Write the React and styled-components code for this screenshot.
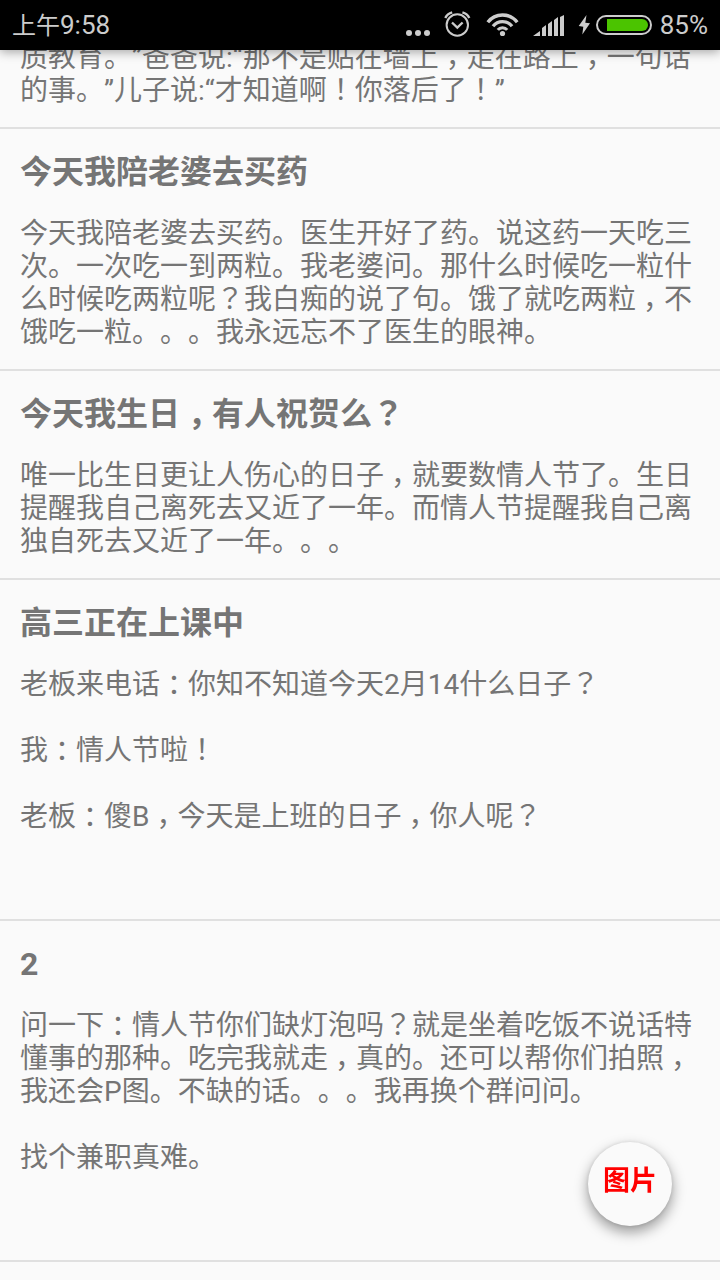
import React from "react";
import styled, { createGlobalStyle } from "styled-components";

const GlobalStyle = createGlobalStyle`
  body {
    margin: 0;
    background: #fafafa;
    color: #757575;
    font-family: Roboto, "Noto Sans CJK SC", sans-serif;
    text-spacing-trim: space-all;
  }
`;

const Screen = styled.div`
  height: 100vh;
  display: flex;
  flex-direction: column;
  overflow: hidden;
`;

const StatusBar = styled.header`
  position: relative;
  z-index: 1;
  flex: none;
  display: flex;
  align-items: center;
  justify-content: space-between;
  box-sizing: border-box;
  height: 50px;
  padding: 0 12px;
  background: #000;
  color: #ccc;
  font-size: 26px;
  line-height: 26px;
  box-shadow: 0 2px 10px rgba(0, 0, 0, 0.35);
`;

const Meridiem = styled.span`
  font-size: 24px;
  line-height: 1;
`;

const StatusIcons = styled.div`
  display: flex;
  align-items: center;
  gap: 7px;
  svg {
    display: block;
  }
`;

const Feed = styled.main`
  flex: 1;
  min-height: 0;
  overflow: hidden;
  display: flex;
  flex-direction: column;
`;

// list is scrolled so the first joke is partly under the status bar
const List = styled.div`
  margin-top: -30px;
`;

const Joke = styled.article`
  padding: 21px 20px 20px;
  border-bottom: 2px solid #e0e0e0;
`;

const Title = styled.h2`
  margin: 0 0 23px;
  font-size: 32px;
  line-height: 44px;
  font-weight: 700;
`;

const Text = styled.p`
  margin: 0;
  font-size: 28px;
  line-height: 33px;
  white-space: pre-line;
`;

// full-width punctuation sits in the middle of its cell
const Mark = styled.span`
  font-family: "Noto Sans CJK JP", sans-serif;
  line-height: 1;
`;

const HalfMark = styled.span`
  padding: 0 0.25em;
  font-feature-settings: "halt";
  line-height: 1;
`;

const Fab = styled.button`
  position: fixed;
  right: 48px;
  bottom: 54px;
  width: 84px;
  height: 84px;
  padding: 0 0 12px;
  border: 0;
  border-radius: 50%;
  background: #fafafa;
  color: #f00;
  font: 700 27px Roboto, "Noto Sans CJK SC", sans-serif;
  box-shadow: 0 6px 14px rgba(0, 0, 0, 0.4), 0 0 4px rgba(0, 0, 0, 0.1);
`;

const withMarks = (text) =>
  text.split(/([，：？！])/).map((part, i) => {
    if (/^[，：]$/.test(part)) return <HalfMark key={i}>{part}</HalfMark>;
    if (/^[？！]$/.test(part)) return <Mark key={i}>{part}</Mark>;
    return part;
  });

const jokes = [
  {
    text: "质教育。”爸爸说:“那不是贴在墙上，走在路上，一句话的事。”儿子说:“才知道啊！你落后了！”",
  },
  {
    title: "今天我陪老婆去买药",
    text: "今天我陪老婆去买药。医生开好了药。说这药一天吃三次。一次吃一到两粒。我老婆问。那什么时候吃一粒什么时候吃两粒呢？我白痴的说了句。饿了就吃两粒，不饿吃一粒。。。我永远忘不了医生的眼神。",
  },
  {
    title: "今天我生日，有人祝贺么？",
    text: "唯一比生日更让人伤心的日子，就要数情人节了。生日提醒我自己离死去又近了一年。而情人节提醒我自己离独自死去又近了一年。。。",
  },
  {
    title: "高三正在上课中",
    text: "老板来电话：你知不知道今天2月14什么日子？\n\n我：情人节啦！\n\n老板：傻B，今天是上班的日子，你人呢？\n\n\n",
  },
  {
    title: "2",
    text: "问一下：情人节你们缺灯泡吗？就是坐着吃饭不说话特懂事的那种。吃完我就走，真的。还可以帮你们拍照，我还会P图。不缺的话。。。我再换个群问问。\n\n找个兼职真难。\n\n\n",
  },
];

const StatusGlyphs = () => (
  <svg width="248" height="34" viewBox="0 0 248 34" fill="#ccc" aria-hidden="true">
    <circle cx="4" cy="25" r="3" />
    <circle cx="13" cy="25" r="3" />
    <circle cx="22" cy="25" r="3" />
    <g fill="none" stroke="#ccc" strokeWidth="2">
      <circle cx="52.3" cy="17" r="10.7" />
      <path d="M47 14.5l5.3 5 5.3-5" strokeWidth="2.4" />
      <path d="M40.3 10Q42.3 5.8 47.2 4.4M64.3 10Q62.3 5.8 57.4 4.4" strokeWidth="2.4" />
    </g>
    <g fill="none" stroke="#ccc" strokeWidth="3.4">
      <path d="M82.8 14.2A18.5 18.5 0 0 1 112.2 14.2" />
      <path d="M88 18.2A12.2 12.2 0 0 1 107 18.2" />
      <path d="M92.8 21.9A6 6 0 0 1 102.2 21.9" strokeWidth="3" />
    </g>
    <circle cx="97.5" cy="25.5" r="2.6" />
    <path d="M128 28l7-5v5zM137 28v-8l4-3v11zM143 28v-12l4-3v15zM149 28v-16l4-3v19zM155 28v-19l4-2v21z" />
    <path d="M181.5 7l-7.8 11 4.6.7-1 7.8 7.7-11.2-4.7-.6z" />
    <rect x="192" y="8" width="54" height="18" rx="9" fill="none" stroke="#ccc" strokeWidth="2" />
    <path d="M202 11h35a6 6 0 0 1 0 12h-35z" fill="#4bc400" />
  </svg>
);

const App = () => {
  return (
    <Screen>
      <GlobalStyle />
      <StatusBar>
        <span>
          <Meridiem>上午</Meridiem>9:58
        </span>
        <StatusIcons>
          <StatusGlyphs />
          <span>85%</span>
        </StatusIcons>
      </StatusBar>
      <Feed>
        <List>
          {jokes.map((joke) => (
            <Joke key={joke.text}>
              {joke.title && <Title>{withMarks(joke.title)}</Title>}
              <Text>{withMarks(joke.text)}</Text>
            </Joke>
          ))}
        </List>
      </Feed>
      <Fab type="button">图片</Fab>
    </Screen>
  );
};

export default App;
